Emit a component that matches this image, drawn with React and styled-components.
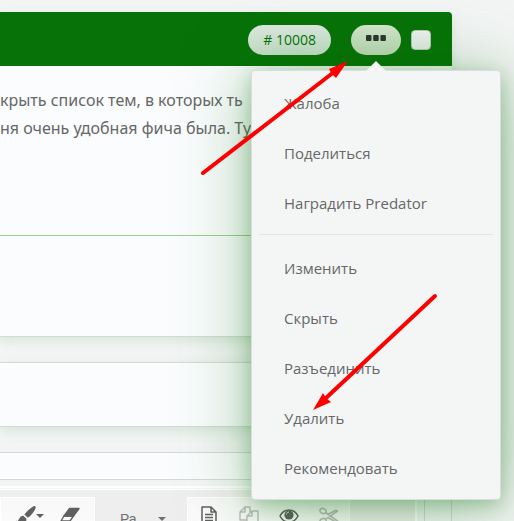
import React from "react";
import styled, { createGlobalStyle } from "styled-components";

const Global = createGlobalStyle`
  * { box-sizing: border-box; }
  body {
    margin: 0;
    background: #f3f5f5;
    color: #676767;
    font-family: "Open Sans", "Noto Sans", sans-serif;
  }
  button, input { font: inherit; }
`;

const Page = styled.main`
  position: relative;
  height: 100vh;
  overflow: hidden;
  padding: 12px 62px 0 0;
`;

const Card = styled.section`
  height: ${(p) => p.$height}px;
  margin-bottom: ${(p) => p.$gap}px;
  background: #fafcfd;
  border: 1px solid #d5d9da;
  border-left: 0;
  box-shadow: ${(p) => (p.$glow ? "0 4px 12px rgba(0, 120, 0, 0.12)" : "none")};
`;

const Post = styled.article`
  margin-bottom: 25px;
  background: #fafcfd;
  border-bottom: 1px solid #d5d9da;
  border-radius: 0 4px 0 0;
  box-shadow: 0 4px 12px rgba(0, 120, 0, 0.12);
`;

const PostHeader = styled.header`
  display: flex;
  align-items: center;
  justify-content: flex-end;
  height: 54px;
  padding-right: 21px;
  padding-top: 2px;
  background: #077207;
  border-radius: 0 4px 0 0;
`;

const PostNumber = styled.a`
  height: 30px;
  margin-right: 20px;
  padding: 0 15px;
  border-radius: 15px;
  background: linear-gradient(#dde8e0, #c8dfcb);
  color: #077207;
  font-size: 14px;
  line-height: 30px;
  text-decoration: none;
`;

const MenuAnchor = styled.div`
  position: relative;
  height: 30px;
  margin-right: 10px;
`;

const MoreButton = styled.button`
  display: flex;
  justify-content: center;
  width: 50px;
  height: 30px;
  padding: 10px 0 0;
  border: 0;
  border-radius: 15px;
  background: linear-gradient(#d4e6cd, #c0dab9);
`;

const SelectPost = styled.input`
  appearance: none;
  width: 20px;
  height: 20px;
  margin: 0;
  border: 1px solid #b5c9b7;
  border-radius: 4px;
  background: linear-gradient(#f0f3f1, #e3ebe5);
`;

const Menu = styled.ul`
  position: absolute;
  z-index: 2;
  top: 45px;
  left: 50%;
  width: 250px;
  margin: 0 0 0 -125px;
  padding: 7px 7px 6px;
  list-style: none;
  background: #f4f6f6;
  border: 1px solid #d9dddd;
  border-radius: 4px;
  box-shadow: 0 5px 20px rgba(0, 110, 0, 0.3), 0 5px 75px rgba(0, 110, 0, 0.35);

  &::before {
    content: "";
    position: absolute;
    top: -10px;
    left: 50%;
    margin-left: -10px;
    border: solid transparent;
    border-width: 0 10px 10px;
    border-bottom-color: #f4f6f6;
  }
`;

const MenuItem = styled.button`
  display: block;
  width: 100%;
  height: 50px;
  padding: 0 25px;
  border: 0;
  background: none;
  color: #676767;
  font-size: 15px;
  text-align: left;
`;

const Divider = styled.li`
  height: 1px;
  margin: 6px 0 8px;
  background: #e1e5e5;
`;

const Message = styled.div`
  height: 170px;
  padding-top: 20px;
  overflow: hidden;
  border-bottom: 1px solid #9dce94;
  font-family: "Noto Sans", "Open Sans", sans-serif;
  font-size: 16px;
  line-height: 28px;
  white-space: nowrap;
`;

const PostFooter = styled.footer`
  height: 100px;
`;

const ReplyForm = styled.form`
  padding-right: 26px;
  border-right: 1px solid #d5d9da;
`;

const Editor = styled.div`
  padding-right: 7px;
  border-top: 2px solid #ffffff;
  border-right: 1px solid #d5d9da;
`;

const Toolbar = styled.div`
  display: flex;
  height: 80px;
  margin-top: 1px;
  padding-top: 7px;
  background: #eeeeee;
  border-top: 1px solid #ffffff;
  border-right: 2px solid #ffffff;
`;

const Group = styled.div`
  display: flex;
  align-items: flex-start;
  flex: 0 0 ${(p) => p.$width}px;
  padding: 7px 0 0 ${(p) => p.$indent}px;
  background: linear-gradient(#f8f8f8, #ffffff);
  border: 1px solid #ffffff;
`;

const Tool = styled.button`
  display: flex;
  align-items: center;
  justify-content: center;
  flex: 0 0 40px;
  height: 22px;
  padding: 0;
  border: 0;
  background: none;
  color: #606060;

  &:disabled { color: #bcbcbc; }
`;

const StyleButton = styled.button`
  display: flex;
  flex: 0 0 92px;
  justify-content: space-between;
  align-items: center;
  height: 44px;
  padding: 0 21px 0 25px;
  border: 0;
  background: none;
  color: #707070;
  font-family: "Liberation Sans", sans-serif;
  font-size: 14px;
`;

const Arrows = styled.svg`
  position: absolute;
  z-index: 3;
  top: 0;
  left: 0;
  pointer-events: none;
`;

const Caret = () => (
  <svg width="8" height="4" viewBox="0 0 8 4" fill="currentColor"><path d="M0 0h8L4 4z" /></svg>
);

const BrushIcon = () => (
  <svg width="20" height="20" viewBox="0 0 20 20" fill="currentColor">
    <path d="M17.6.3c1.2-.6 2.4.4 2 1.7-.6 2.4-3.400 6-6 8.400-.6.6-1.300 1-2 1.200L8.400 8.600C9 7.400 10 6.300 11.200 5.200 13 3.500 15.800 1.300 17.600.3z" />
    <path d="M7.400 9.800l3 3c.2 3.400-2 6.200-5.400 6.200-2.600 0-4.400-1.300-5-4.600 1.300.9 2 .8 2.600-.6.8-2.400 2.500-3.900 4.800-4z" />
  </svg>
);

const EraserIcon = () => (
  <svg width="20" height="18" viewBox="0 0 20 18" stroke="currentColor" strokeWidth="1.400" strokeLinejoin="round">
    <path fill="currentColor" d="M9.500 1.500H19L13.500 9H4z" />
    <path fill="none" d="M4 9h9.500L10 14H1z" />
  </svg>
);

const FileIcon = () => (
  <svg width="16" height="20" viewBox="0 0 16 20" fill="none" stroke="currentColor" strokeWidth="1.500" strokeLinejoin="round">
    <path d="M1 1h9l5 5v13H1zM10 1v5h5M4 8.500h8M4 11.500h8M4 14.500h8" />
  </svg>
);

const CopyIcon = () => (
  <svg width="20" height="20" viewBox="0 0 20 20" fill="none" stroke="currentColor" strokeWidth="1.400" strokeLinejoin="round">
    <path d="M8 14H1V6l5-5h5v5M6 1v5H1M13 5h6v14H8v-9zM13 5v5H8" />
  </svg>
);

const EyeIcon = () => (
  <svg width="20" height="14" viewBox="0 0 20 14">
    <path fill="none" stroke="currentColor" strokeWidth="1.500" d="M1 7c4-8 14-8 18 0-4 8-14 8-18 0z" />
    <circle cx="10" cy="6" r="4.600" fill="currentColor" />
    <path fill="none" stroke="#d9e4d9" d="M7.500 5.500c0-1.500 1-2.400 2.500-2.400" />
  </svg>
);

const ScissorsIcon = () => (
  <svg width="20" height="18" viewBox="0 0 20 18" fill="none" stroke="currentColor" strokeWidth="1.600" strokeLinejoin="round">
    <ellipse cx="4" cy="4" rx="3.200" ry="2.400" transform="rotate(25 4 4)" />
    <ellipse cx="4" cy="14" rx="3.200" ry="2.400" transform="rotate(-25 4 14)" />
    <path d="M6.500 5.500l12 8.500-2 .8L9 10.500l-2.500 2M9 7.500l7.500-4.300 2 .8-8 5.700" />
  </svg>
);

const firstItems = ["Жалоба", "Поделиться", "Наградить Predator"];
const moreItems = ["Изменить", "Скрыть", "Разъединить", "Удалить", "Рекомендовать"];

const Items = ({ labels }) => labels.map((label) => (
  <li key={label}><MenuItem type="button">{label}</MenuItem></li>
));

export default function App() {
  return (
    <Page>
      <Global />
      <Post>
        <PostHeader>
          <PostNumber href="#10008"># 10008</PostNumber>
          <MenuAnchor>
            <MoreButton type="button" aria-label="Меню" aria-expanded="true">
              <svg width="20" height="6" fill="#2d352d">
                <rect width="5.500" height="6" rx="1" />
                <rect x="7.200" width="5.500" height="6" rx="1" />
                <rect x="14.400" width="5.500" height="6" rx="1" />
              </svg>
            </MoreButton>
            <Menu>
              <Items labels={firstItems} />
              <Divider role="separator" />
              <Items labels={moreItems} />
            </Menu>
          </MenuAnchor>
          <SelectPost type="checkbox" aria-label="Выбрать" />
        </PostHeader>
        <Message>
          крыть список тем, в которых ть<br />
          ня очень удобная фича была. Ту
        </Message>
        <PostFooter />
      </Post>
      <Card $height={65} $gap={25} $glow />
      <Card $height={28} $gap={6} />
      <ReplyForm>
        <Editor>
          <Toolbar>
            <Group $width={95} $indent={9}>
              <Tool type="button" aria-label="Формат"><BrushIcon /><Caret /></Tool>
              <Tool type="button" aria-label="Очистить"><EraserIcon /></Tool>
            </Group>
            <StyleButton type="button"><span>Ра</span><Caret /></StyleButton>
            <Group $width={163} $indent={1}>
              <Tool type="button" aria-label="Документ"><FileIcon /></Tool>
              <Tool type="button" aria-label="Копировать" disabled><CopyIcon /></Tool>
              <Tool type="button" aria-label="Просмотр"><EyeIcon /></Tool>
              <Tool type="button" aria-label="Вырезать" disabled><ScissorsIcon /></Tool>
            </Group>
          </Toolbar>
        </Editor>
      </ReplyForm>
      <Arrows width="514" height="521" fill="#ff0000" stroke="#ff0000" strokeWidth="4" strokeLinecap="round">
        <path d="M203 173 334 72M435 296 326 398" />
        <path stroke="none" d="M348 61 329 69 331 73 336 78zM313 410 323 393 326 398 331 402z" />
      </Arrows>
    </Page>
  );
}
